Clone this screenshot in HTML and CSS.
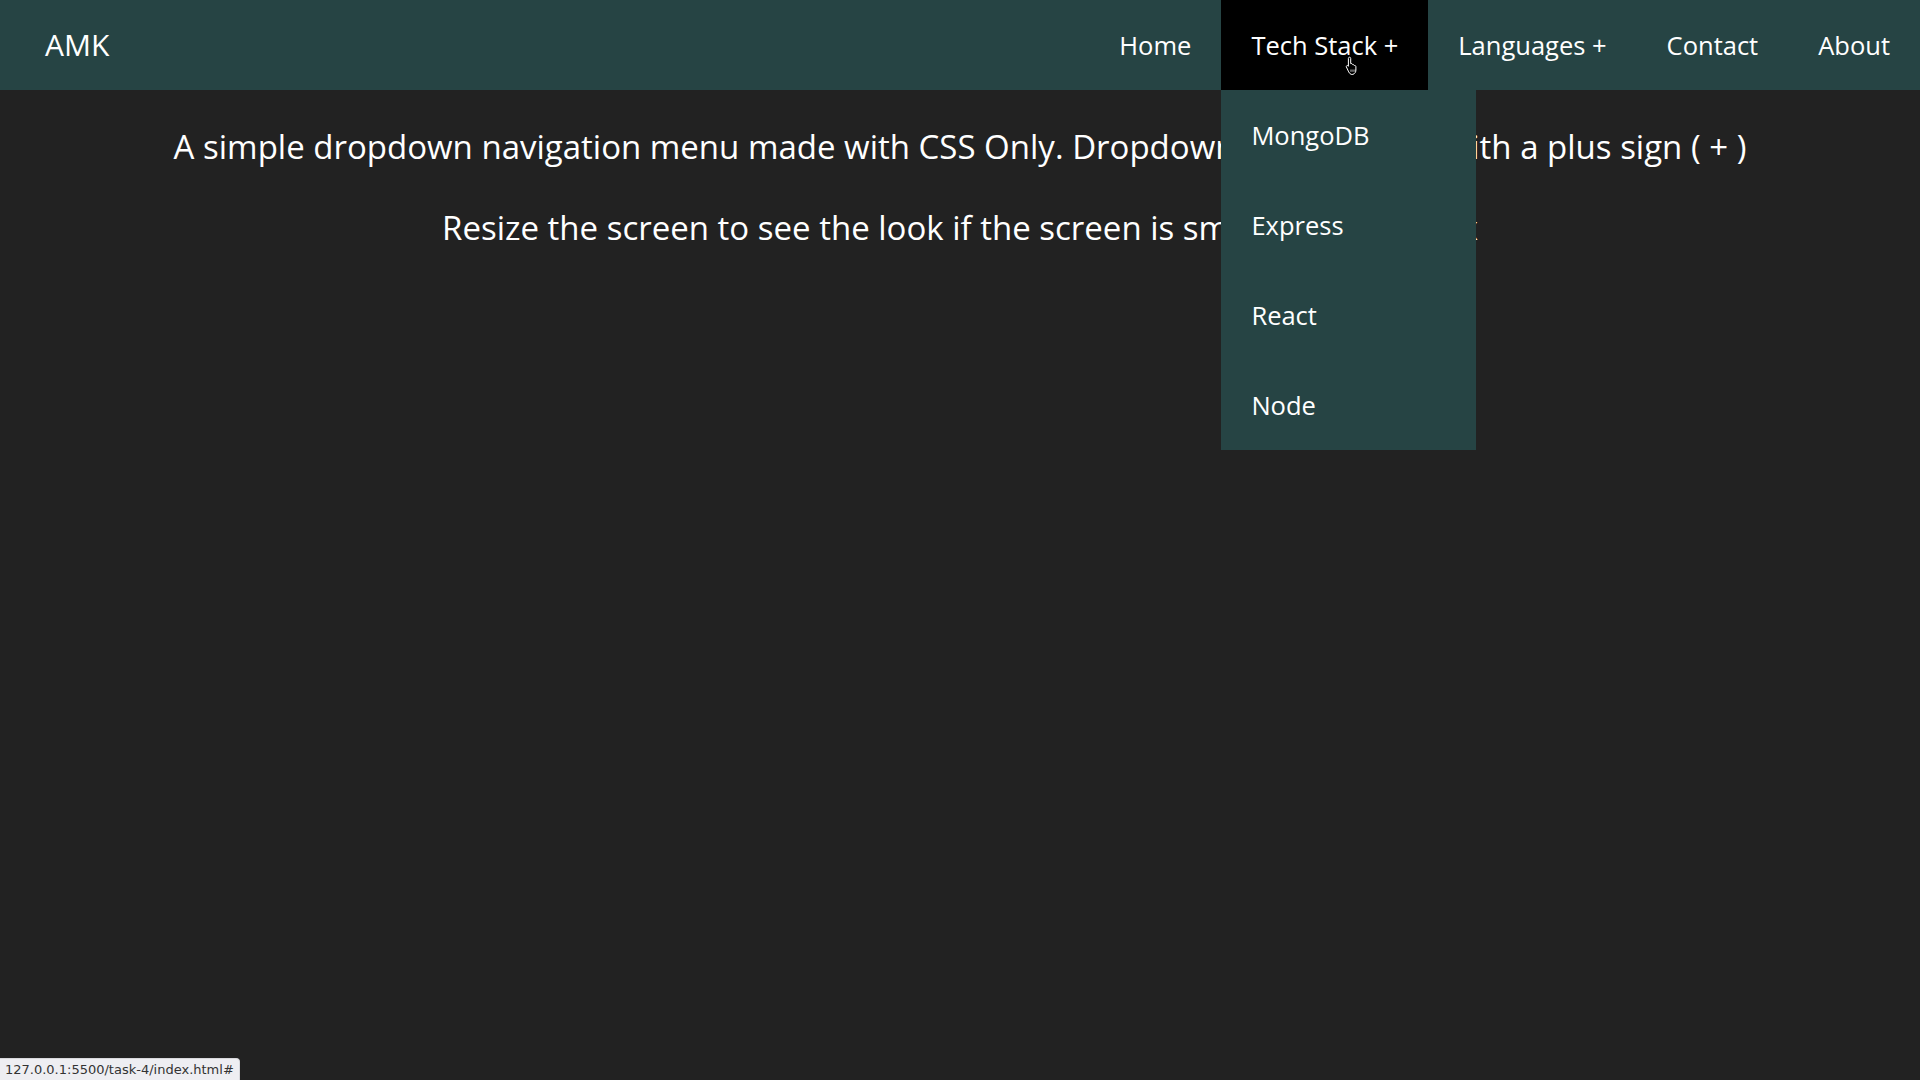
FILE: index.html
```html
<!DOCTYPE html>
<html lang="en">
<head>
<meta charset="utf-8">
<title>Dropdown Menu</title>
<link rel="stylesheet" href="styles.css">
</head>
<body>
<nav class="navbar">
  <a class="logo" href="#">AMK</a>
  <ul class="menu">
    <li class="menu-item"><a href="#">Home</a></li>
    <li class="menu-item has-dropdown open">
      <a href="#">Tech Stack +</a>
      <ul class="dropdown">
        <li><a href="#">MongoDB</a></li>
        <li><a href="#">Express</a></li>
        <li><a href="#">React</a></li>
        <li><a href="#">Node</a></li>
      </ul>
      <svg class="cursor" width="14" height="19" viewBox="0 0 14 19" aria-hidden="true">
        <path d="M4.5 1.2c.7 0 1.2.5 1.2 1.2v5.2l.4-.1c.6-.1 1.2.2 1.3.8l.1.3.3-.1c.6-.1 1.2.2 1.3.8l.1.3.4-.1c.7-.1 1.3.4 1.3 1.1v3.6c0 1.9-1.2 3.6-3 4.2H6.2c-1.1-.5-2-1.4-2.5-2.5L1.4 11c-.3-.6 0-1.2.6-1.4.5-.2 1 0 1.3.4l.1.2V2.4c0-.7.5-1.2 1.1-1.2z" fill="#000" stroke="#fff" stroke-width="1"/>
        <path d="M6 13.5v2.3M8 13.5v2.3M10 13.5v2.3" stroke="#fff" stroke-width=".8"/>
      </svg>
    </li>
    <li class="menu-item has-dropdown"><a href="#">Languages +</a></li>
    <li class="menu-item"><a href="#">Contact</a></li>
    <li class="menu-item"><a href="#">About</a></li>
  </ul>
</nav>
<main class="content">
  <p class="intro">A simple dropdown navigation menu made with CSS Only. Dropdowns are marked with a plus sign ( + )</p>
  <p class="intro">Resize the screen to see the look if the screen is smaller than 768px</p>
</main>
<div class="status">127.0.0.1:5500/task-4/index.html#</div>
</body>
</html>
```

FILE: styles.css
```css
* {
  box-sizing: border-box;
}

html, body {
  margin: 0;
  padding: 0;
}

body {
  background: #222222;
  color: #ffffff;
  font-family: "Open Sans", sans-serif;
  min-height: 100vh;
}

a {
  color: #ffffff;
  text-decoration: none;
}

.navbar {
  display: flex;
  justify-content: space-between;
  align-items: center;
  height: 90px;
  background: #264444;
  padding-left: 45px;
  position: relative;
  z-index: 10;
}

.logo {
  font-size: 30px;
  line-height: 90px;
}

.menu {
  display: flex;
  list-style: none;
  margin: 0;
  padding: 0;
  height: 90px;
}

.menu-item {
  position: relative;
}

.menu-item > a {
  display: block;
  padding: 0 30px;
  font-size: 25.5px;
  line-height: 91px;
  height: 90px;
  white-space: nowrap;
}

.menu-item.open > a {
  background: #000000;
}

.dropdown {
  position: absolute;
  top: 90px;
  left: 0;
  width: 255px;
  list-style: none;
  margin: 0;
  padding: 0;
  background: #264444;
}

.dropdown a {
  display: block;
  padding: 0 30px;
  font-size: 25.5px;
  line-height: 91px;
  height: 90px;
}

.cursor {
  position: absolute;
  left: 124px;
  top: 56px;
}

.content {
  padding-top: 8px;
  text-align: center;
}

.intro {
  font-size: 33px;
  line-height: 44px;
  margin: 27px 0 37px;
}

.intro + .intro {
  margin-top: 0;
}

.status {
  position: fixed;
  left: 0;
  bottom: 0;
  height: 22px;
  padding: 0 5px;
  background: #eeeef2;
  color: #333333;
  font-family: "DejaVu Sans", sans-serif;
  font-size: 13px;
  line-height: 22px;
  border-top-right-radius: 4px;
  border: 1px solid #d8d8dc;
  border-left: none;
  border-bottom: none;
}
```
